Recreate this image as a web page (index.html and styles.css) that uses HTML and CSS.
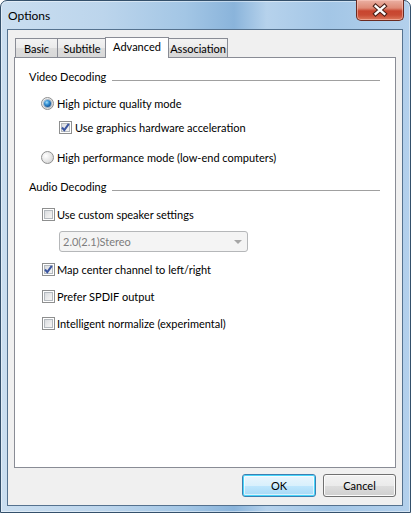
FILE: index.html
```html
<!DOCTYPE html>
<html>
<head>
<meta charset="utf-8">
<title>Options</title>
<link rel="stylesheet" href="styles.css">
</head>
<body>
<div class="window">
  <div class="titlebar">
    <span class="title">Options</span>
    <div class="close">
      <svg width="47" height="20" viewBox="0 0 47 20">
        <path d="M19 6 L28 14 M28 6 L19 14" stroke="#4a2018" stroke-width="4.6" stroke-linecap="square" fill="none"/>
        <path d="M19 6 L28 14 M28 6 L19 14" stroke="#ffffff" stroke-width="2.4" stroke-linecap="square" fill="none"/>
      </svg>
    </div>
  </div>
  <div class="frame">
    <div class="client">
      <div class="tabs">
        <div class="tab t-basic">Basic</div>
        <div class="tab t-sub">Subtitle</div>
        <div class="tab t-adv active">Advanced</div>
        <div class="tab t-assoc">Association</div>
      </div>
      <div class="panel">
        <div class="head"><span>Video Decoding</span><span class="rule"></span></div>
        <div class="opt ind1 g8"><span class="rb on"></span><span class="lbl3">High picture quality mode</span></div>
        <div class="opt ind2 g4"><span class="cb"><svg width="11" height="11" viewBox="0 0 11 11"><path d="M2 5.5 L4.3 8.2 L8.8 1.8" stroke="#3a55a0" stroke-width="2" fill="none"/></svg></span><span class="lbl3">Use graphics hardware acceleration</span></div>
        <div class="opt ind1 g10"><span class="rb"></span><span class="lbl3">High performance mode (low-end computers)</span></div>
        <div class="head g12"><span>Audio Decoding</span><span class="rule"></span></div>
        <div class="opt ind1b g9"><span class="cb"></span><span class="lbl2">Use custom speaker settings</span></div>
        <div class="combo"><span>2.0(2.1)Stereo</span><span class="arrow"></span></div>
        <div class="opt ind1b g7"><span class="cb"><svg width="11" height="11" viewBox="0 0 11 11"><path d="M2 5.5 L4.3 8.2 L8.8 1.8" stroke="#3a55a0" stroke-width="2" fill="none"/></svg></span><span class="lbl2">Map center channel to left/right</span></div>
        <div class="opt ind1b g7"><span class="cb"></span><span class="lbl2">Prefer SPDIF output</span></div>
        <div class="opt ind1b g7"><span class="cb"></span><span class="lbl2">Intelligent normalize (experimental)</span></div>
      </div>
      <div class="buttons">
        <div class="btn default">OK</div>
        <div class="btn cancel">Cancel</div>
      </div>
    </div>
  </div>
</div>
</body>
</html>
```

FILE: styles.css
```css
* { box-sizing: border-box; }
html, body { margin: 0; padding: 0; }
body {
  width: 411px;
  height: 513px;
  overflow: hidden;
  background: #ffffff;
  font-family: Lato, "Liberation Sans", sans-serif;
  font-size: 11px;
  color: #000000;
}
.window {
  width: 411px;
  height: 513px;
  border: 1px solid #34506b;
  border-radius: 7px 7px 0 0;
  display: flex;
  flex-direction: column;
  background: linear-gradient(to right, #cadef0 0%, #bcd5ec 25%, #a3c6e5 45%, #8ab4db 57%, #b6d2ec 65%, #a3c6e6 80%, #b3d0ec 100%);
  box-shadow: inset 0 0 0 1px rgba(255,255,255,0.45);
}
.titlebar {
  height: 28px;
  flex: none;
  display: flex;
  justify-content: space-between;
  align-items: center;
  padding: 0 6px 0 7px;
}
.title {
  font-size: 12px;
  color: #000;
  padding-top: 1px;
}
.close {
  align-self: flex-start;
  margin-top: -1px;
  width: 48px;
  height: 21px;
  border: 1px solid #6a2a20;
  border-top: none;
  border-radius: 0 0 5px 5px;
  background: linear-gradient(#eab0a3 0%, #de8a76 40%, #c8452f 55%, #c94b34 75%, #dc7a5d 100%);
  box-shadow: inset 0 0 0 1px rgba(255,210,200,0.5);
  display: flex;
  align-items: center;
  justify-content: center;
}
.close svg { display: block; }
.frame {
  flex: 1;
  display: flex;
  padding: 0 7px 6px 6px;
}
.client {
  flex: 1;
  display: flex;
  flex-direction: column;
  border: 1px solid #55728f;
  background: #f0f0f0;
}
.tabs {
  display: flex;
  align-items: flex-end;
  height: 20px;
  margin: 7px 0 0 7px;
  position: relative;
  z-index: 1;
}
.tab {
  height: 19px;
  border: 1px solid #898c95;
  border-bottom: none;
  background: linear-gradient(#f3f3f3 0%, #ebebeb 50%, #dddddd 51%, #d8d8d8 100%);
  text-align: center;
  line-height: 19px;
  white-space: nowrap;
}
.t-basic { width: 43px; }
.t-sub { width: 50px; margin-left: -1px; }
.t-adv { width: 64px; margin-left: -2px; }
.t-assoc { width: 60px; margin-left: -1px; }
.tab.active {
  height: 21px;
  margin-bottom: -1px;
  background: #ffffff;
  line-height: 17px;
  position: relative;
  z-index: 2;
}
.panel {
  height: 411px;
  flex: none;
  margin: 0 6px 0 6px;
  border: 1px solid #898c95;
  background: #ffffff;
  padding: 11px 15px 0 14px;
}
.head {
  display: flex;
  height: 16px;
  line-height: 16px;
}
.rule {
  flex: 1;
  height: 1px;
  margin: 11px 0 0 6px;
  background: #a0a0a0;
}
.opt {
  display: flex;
  align-items: center;
  height: 20px;
  white-space: nowrap;
}
.ind1 { margin-left: 12px; }
.ind1b { margin-left: 13px; }
.ind2 { margin-left: 30px; }
.g4 { margin-top: 4px; }
.g7 { margin-top: 7px; }
.g8 { margin-top: 8px; }
.g9 { margin-top: 9px; }
.g10 { margin-top: 10px; }
.g12 { margin-top: 12px; }
.lbl3 { margin-left: 3px; }
.lbl2 { margin-left: 2px; }
.cb {
  width: 13px;
  height: 13px;
  flex: none;
  border: 1px solid #8e8f8f;
  background: linear-gradient(135deg, #d0d4d9 0%, #eeeeee 60%, #f8f8f8 100%);
  box-shadow: inset 0 0 0 1px #ffffff, inset 0 0 0 2px #b4b9be;
  display: flex;
  align-items: center;
  justify-content: center;
}
.cb svg { display: block; }
.rb {
  width: 13px;
  height: 13px;
  flex: none;
  border-radius: 50%;
  border: 1px solid #8e8f8f;
  background: radial-gradient(circle at 35% 35%, #ffffff 0%, #e4e4e4 55%, #c9c9c9 100%);
  display: flex;
  align-items: center;
  justify-content: center;
}
.rb.on::after {
  content: "";
  width: 7px;
  height: 7px;
  border-radius: 50%;
  background: radial-gradient(circle at 40% 35%, #a6e0fb 0%, #3a95d6 35%, #145a9e 70%, #0d3f74 100%);
  box-shadow: 0 0 0 1px rgba(30,80,130,0.35);
}
.combo {
  margin: 7px 0 0 30px;
  width: 189px;
  height: 21px;
  border: 1px solid #b5b7b9;
  border-radius: 3px;
  background: #f4f4f4;
  color: #7d7d7d;
  display: flex;
  align-items: center;
  justify-content: space-between;
  padding: 0 5px 0 3px;
}
.arrow {
  width: 0;
  height: 0;
  border-left: 4px solid transparent;
  border-right: 4px solid transparent;
  border-top: 4px solid #a6a6a6;
}
.buttons {
  display: flex;
  justify-content: flex-end;
  gap: 7px;
  margin: 6px 6px 0 0;
}
.btn {
  height: 23px;
  border: 1px solid #707070;
  border-radius: 3px;
  text-align: center;
  line-height: 21px;
  box-shadow: inset 0 0 0 1px #fbfbfb;
  background: linear-gradient(#f2f2f2 0%, #ebebeb 50%, #dddddd 51%, #cfcfcf 100%);
}
.btn.default {
  width: 74px;
  border-color: #3c7fb1;
  box-shadow: inset 0 0 0 1px #48d6fb, inset 0 0 0 2px rgba(255,255,255,0.6);
  background: linear-gradient(#eaf6fd 0%, #d9f0fc 50%, #bee6fd 51%, #a7d9f5 100%);
}
.btn.cancel { width: 73px; }
```
